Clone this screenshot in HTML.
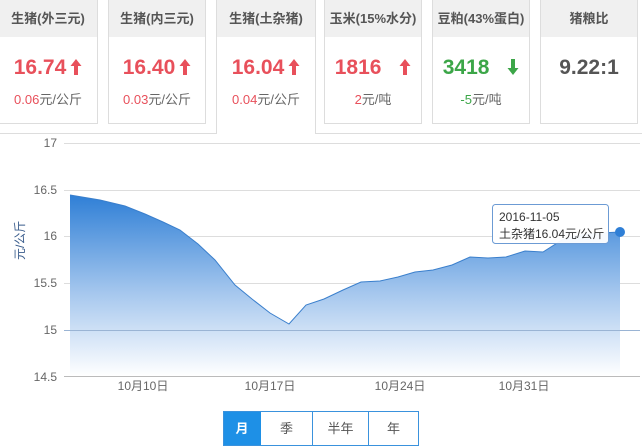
<!DOCTYPE html>
<html><head><meta charset="utf-8"><style>
*{margin:0;padding:0;box-sizing:border-box}
body{width:642px;height:446px;background:#fff;position:relative;overflow:hidden;font-family:"Liberation Sans","Noto Sans CJK SC",sans-serif}
.card{position:absolute;top:0;height:124px;border:1px solid #ddd;border-top:none;background:#fff;text-align:center}
.card .h{height:37px;background:#f0f0f0;line-height:37px;font-size:13px;color:#555;font-weight:bold}
.card .v{margin-top:18px;font-size:21px;font-weight:bold;line-height:26px}
.card .s{margin-top:8px;font-size:13px;color:#666}
.r{color:#e8505b}.g{color:#3ca648}
.a{display:inline-block;vertical-align:-2px;margin-left:4px}
.panel{position:absolute;left:0;top:133px;width:642px;height:1px;background:#ddd}
.btns{position:absolute;left:223px;top:411px;height:35px;display:flex;border:1px solid #3a92dd}
.btns div{line-height:33px;font-size:13px;color:#555;text-align:center;border-right:1px solid #3a92dd}
</style></head><body>
<div class="card" style="left:-2px;width:100px"><div class="h">生猪(外三元)</div><div class="v r">16.74<svg class="a" width="12" height="18"><path d="M6 1 L11.5 8 L8 8 L8 17 L4 17 L4 8 L0.5 8 Z" fill="#e8505b"/></svg></div><div class="s"><span class="r">0.06</span>元/公斤</div></div>
<div class="card" style="left:108px;width:98px"><div class="h">生猪(内三元)</div><div class="v r">16.40<svg class="a" width="12" height="18"><path d="M6 1 L11.5 8 L8 8 L8 17 L4 17 L4 8 L0.5 8 Z" fill="#e8505b"/></svg></div><div class="s"><span class="r">0.03</span>元/公斤</div></div>
<div class="panel"></div>
<div class="card" style="left:216px;width:100px;height:134px;border-bottom:none;z-index:2"><div class="h">生猪(土杂猪)</div><div class="v r">16.04<svg class="a" width="12" height="18"><path d="M6 1 L11.5 8 L8 8 L8 17 L4 17 L4 8 L0.5 8 Z" fill="#e8505b"/></svg></div><div class="s"><span class="r">0.04</span>元/公斤</div></div>
<div class="card" style="left:324px;width:98px"><div class="h">玉米(15%水分)</div><div class="v r">1816 <svg class="a" style="margin-left:12px" width="12" height="18"><path d="M6 1 L11.5 8 L8 8 L8 17 L4 17 L4 8 L0.5 8 Z" fill="#e8505b"/></svg></div><div class="s"><span class="r">2</span>元/吨</div></div>
<div class="card" style="left:432px;width:98px"><div class="h">豆粕(43%蛋白)</div><div class="v g">3418 <svg class="a" style="margin-left:12px" width="12" height="18"><path d="M6 17 L11.5 10 L8 10 L8 1 L4 1 L4 10 L0.5 10 Z" fill="#3ca648"/></svg></div><div class="s"><span class="g">-5</span>元/吨</div></div>
<div class="card" style="left:540px;width:98px"><div class="h">猪粮比</div><div class="v" style="color:#555">9.22:1</div></div>
<svg style="position:absolute;left:0;top:0" width="642" height="446">
<defs><linearGradient id="gr" x1="0" y1="0" x2="0" y2="1"><stop offset="0" stop-color="#2f7fd6"/><stop offset="0.55" stop-color="#a7c8ee"/><stop offset="1" stop-color="#fff"/></linearGradient></defs>
<g stroke="#ddd" stroke-width="1">
<line x1="64" y1="143.5" x2="640" y2="143.5"/><line x1="64" y1="190.5" x2="640" y2="190.5"/><line x1="64" y1="236.5" x2="640" y2="236.5"/><line x1="64" y1="283.5" x2="640" y2="283.5"/><line x1="64" y1="330.5" x2="640" y2="330.5"/></g>
<path d="M70,195 L100,200 L125,206 L145,214 L163,222 L180,230 L198,244 L215,260 L235,285 L252,299 L270,313 L289,324 L306,305 L324,299 L343,290 L361,282 L380,281 L398,277 L415,272 L433,270 L452,265 L470,257 L488,258 L506,257 L525,251 L543,252 L562,240 L580,235 L600,233 L620,232 L620,376 L70,376 Z" fill="url(#gr)"/>
<path d="M70,195 L100,200 L125,206 L145,214 L163,222 L180,230 L198,244 L215,260 L235,285 L252,299 L270,313 L289,324 L306,305 L324,299 L343,290 L361,282 L380,281 L398,277 L415,272 L433,270 L452,265 L470,257 L488,258 L506,257 L525,251 L543,252 L562,240 L580,235 L600,233 L620,232" fill="none" stroke="#3a7fcc" stroke-width="1"/>
<line x1="64" y1="330.5" x2="640" y2="330.5" stroke="#9ab4d4"/>
<line x1="64" y1="376.5" x2="640" y2="376.5" stroke="#bbb"/>
<g font-size="12" fill="#666" text-anchor="end" font-family="Liberation Sans">
<text x="57" y="147">17</text><text x="57" y="194">16.5</text><text x="57" y="240">16</text><text x="57" y="287">15.5</text><text x="57" y="334">15</text><text x="57" y="381">14.5</text></g>
<text transform="translate(24,260) rotate(-90)" font-size="12" fill="#3a5c8c">元/公斤</text>
<g font-size="12" fill="#666" text-anchor="middle"><text x="143" y="390">10月10日</text><text x="270" y="390">10月17日</text><text x="400" y="390">10月24日</text><text x="524" y="390">10月31日</text></g>
<rect x="492.5" y="204.5" width="116" height="39" rx="3" fill="#fff" fill-opacity="0.95" stroke="#6c9bd4"/>
<text x="499" y="221" font-size="12" fill="#333">2016-11-05</text>
<text x="499" y="238" font-size="12" fill="#333">土杂猪16.04元/公斤</text>
<circle cx="620" cy="232" r="5" fill="#2f7fd6"/>
</svg>
<div class="btns"><div style="width:37px;background:#1e90e6;color:#fff;font-weight:bold;border-color:#1e90e6">月</div><div style="width:52px">季</div><div style="width:56px">半年</div><div style="width:49px;border-right:none">年</div></div>
</body></html>
